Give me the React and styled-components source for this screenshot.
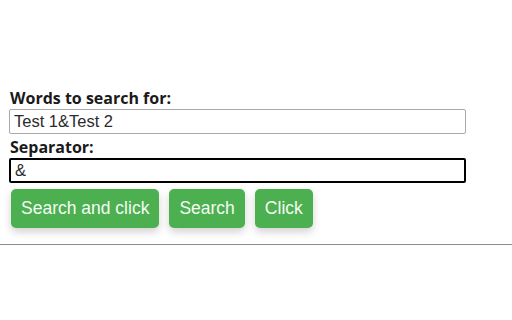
import React, { useState } from 'react';
import styled, { createGlobalStyle } from 'styled-components';

const GlobalStyle = createGlobalStyle`
  html, body {
    margin: 0;
    padding: 0;
    background: #ffffff;
  }
  body {
    font-family: 'Liberation Sans', Arial, sans-serif;
  }
`;

function App() {
  const [words, setWords] = useState('Test 1&Test 2');
  const [separator, setSeparator] = useState('&');

  return (
    <>
      <GlobalStyle />
      <Page>
        <Form>
          <Label htmlFor='words'>Words to search for:</Label>
          <TextInput
            id='words'
            value={words}
            onChange={(e) => setWords(e.target.value)}
          />
          <Label htmlFor='separator'>Separator:</Label>
          <TextInput
            id='separator'
            $focused
            value={separator}
            onChange={(e) => setSeparator(e.target.value)}
          />
          <Buttons>
            <Button>Search and click</Button>
            <Button>Search</Button>
            <Button>Click</Button>
          </Buttons>
        </Form>
        <Divider />
      </Page>
    </>
  );
}

const Page = styled.div`
  width: 512px;
  height: 320px;
  padding-top: 88px;
  box-sizing: border-box;
  overflow: hidden;
`;

const Form = styled.div`
  display: flex;
  flex-direction: column;
  align-items: flex-start;
  padding: 0 46px 0 9px;
`;

const Label = styled.label`
  font-family: 'Open Sans', 'Noto Sans', sans-serif;
  font-weight: 700;
  font-size: 16px;
  line-height: 20px;
  color: #1a1a1a;
  padding-left: 1px;
`;

const TextInput = styled.input`
  box-sizing: border-box;
  width: 457px;
  height: 25px;
  margin: 1px 0 3px;
  padding: 0 4px;
  font-family: 'Liberation Sans', Arial, sans-serif;
  font-size: 16.5px;
  color: #2b2b2b;
  background: #fff;
  border: ${(p) => (p.$focused ? '2px solid #000' : '1px solid #a9a9a9')};
  border-radius: 2px;
  outline: none;
`;

const Buttons = styled.div`
  display: flex;
  gap: 10px;
  margin-top: 3px;
  padding-left: 2px;
`;

const Button = styled.button`
  font-family: 'Liberation Sans', Arial, sans-serif;
  font-size: 17.5px;
  line-height: 19px;
  color: #f4fbf4;
  background: #4caf50;
  border: none;
  border-radius: 5px;
  padding: 10px 10px;
  box-shadow: 0 4px 8px rgba(0, 0, 0, 0.18);
  cursor: pointer;
`;

const Divider = styled.div`
  margin-top: 16px;
  border-top: 1px solid #8c8c8c;
  width: 100%;
`;

export default App;
